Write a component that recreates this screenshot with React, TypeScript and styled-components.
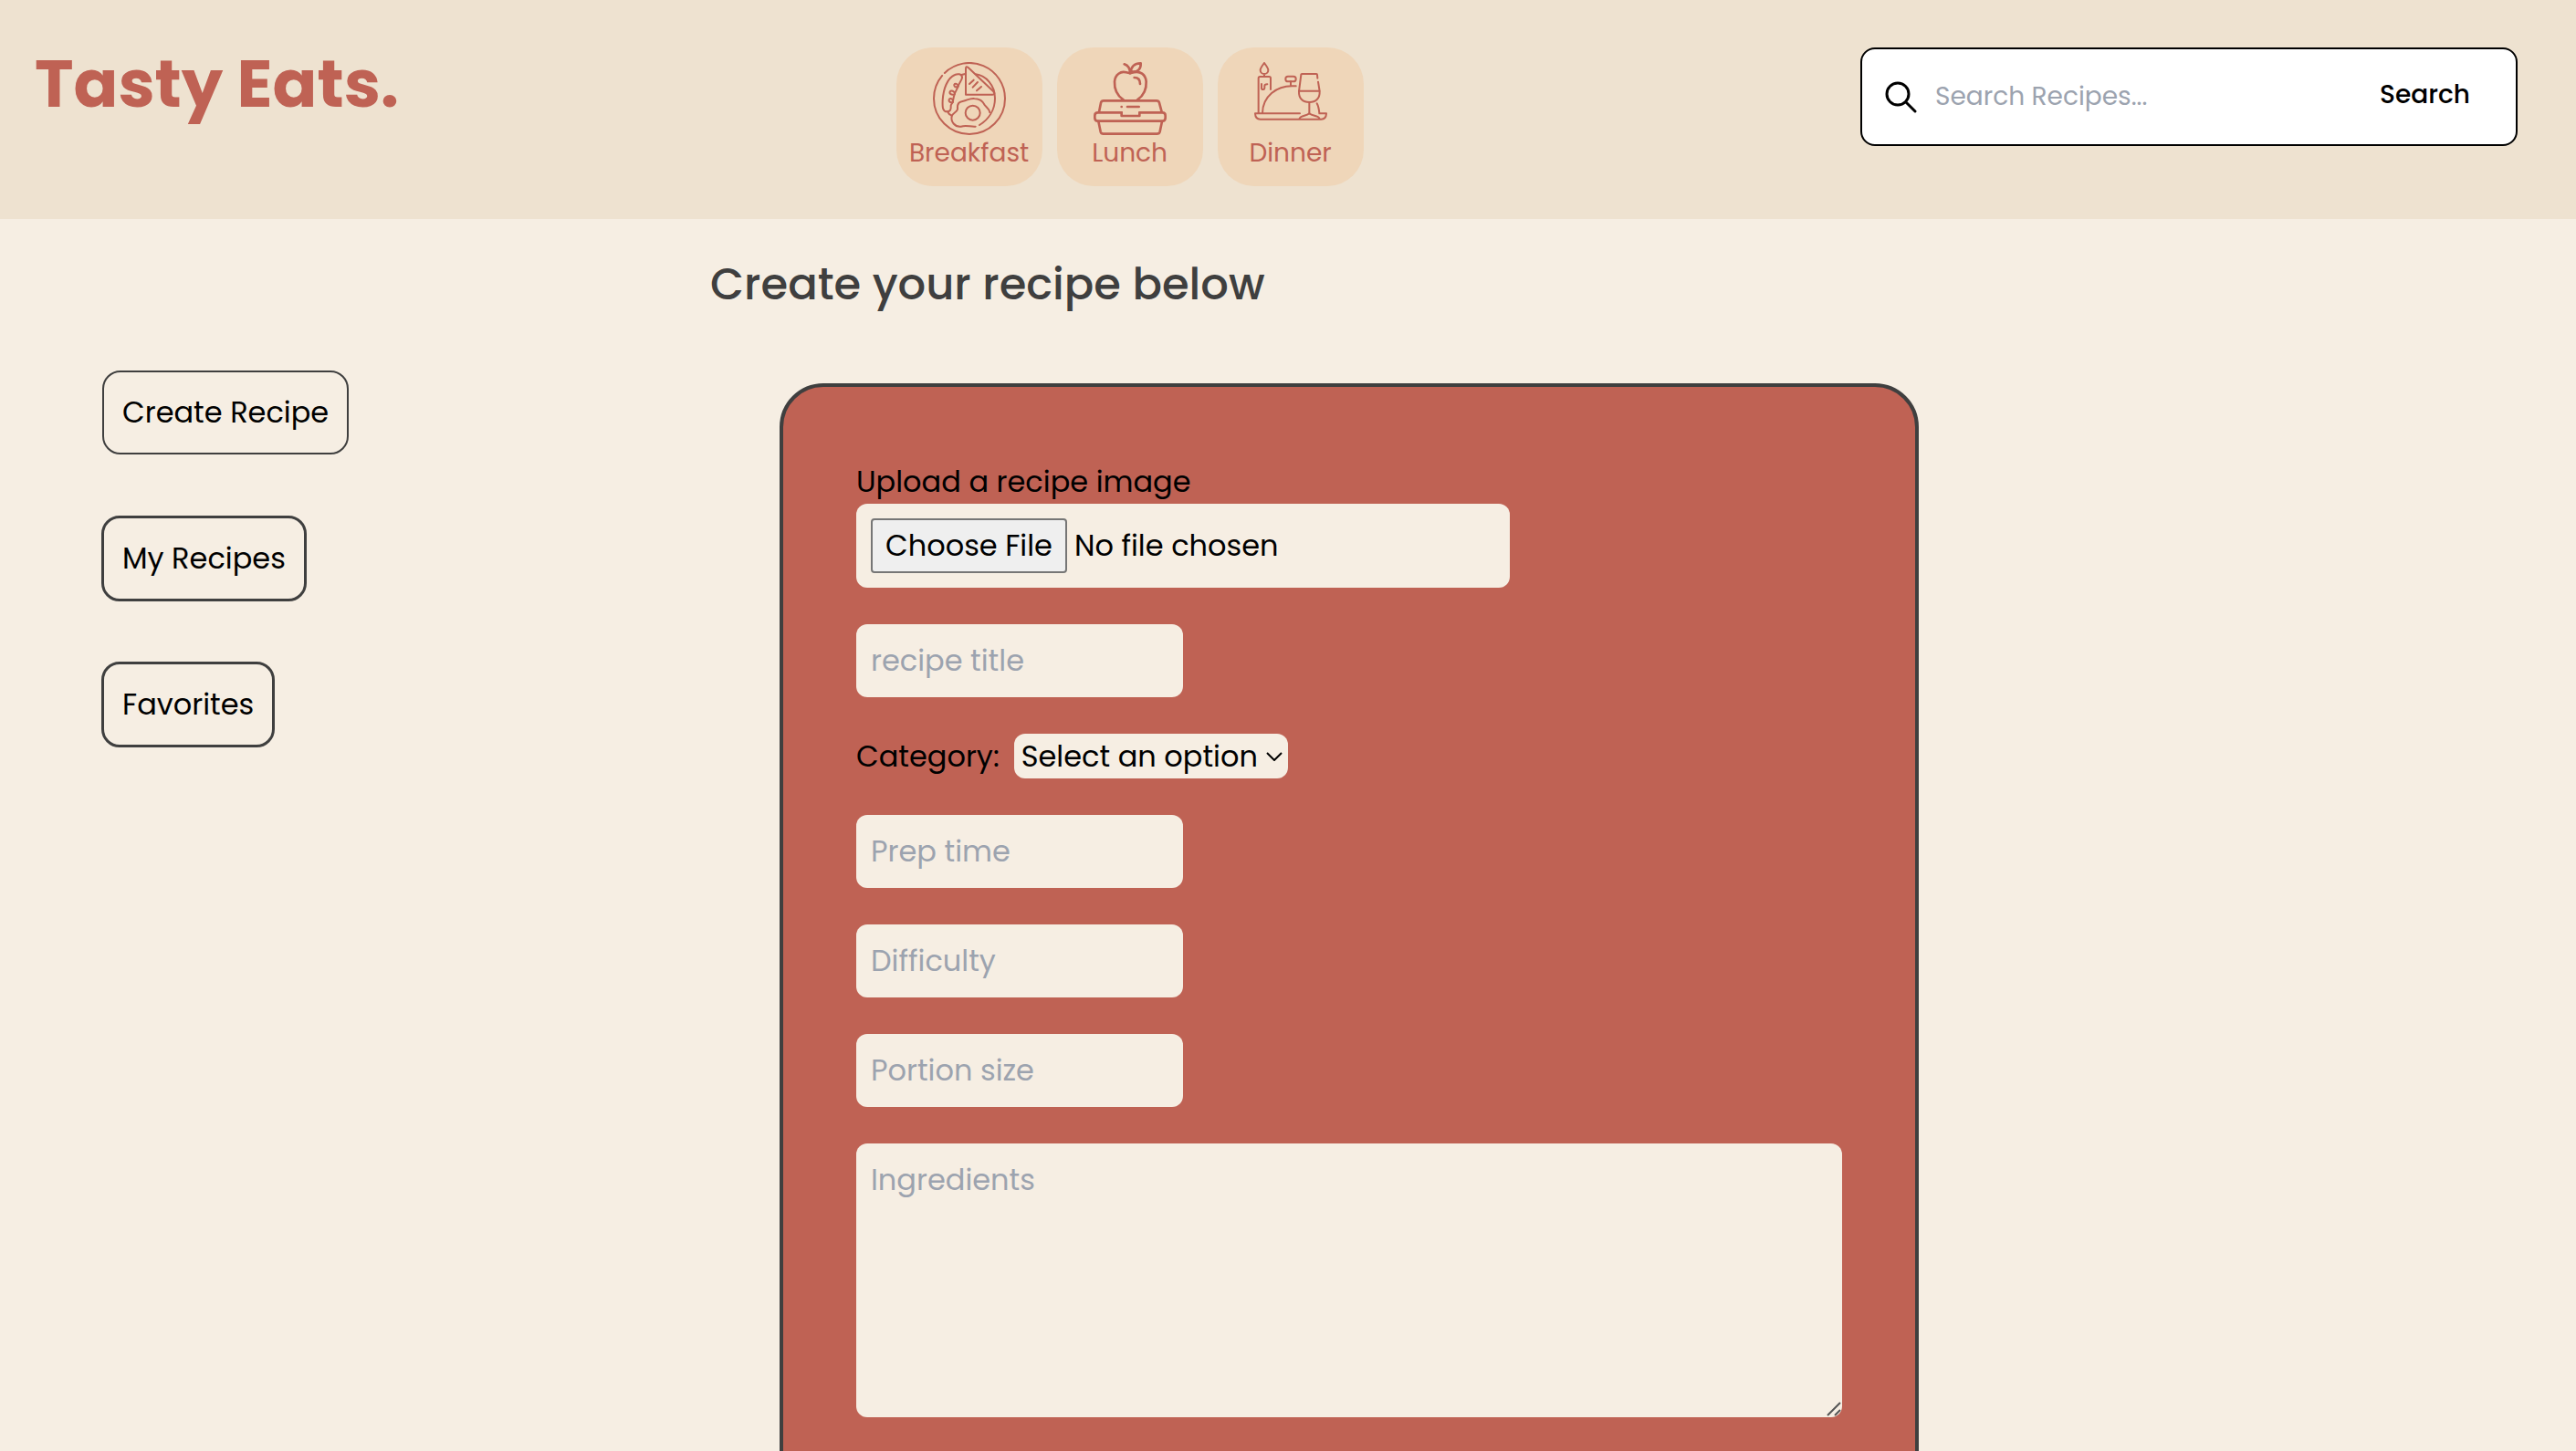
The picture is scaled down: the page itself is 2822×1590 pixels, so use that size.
import React from "react";
import styled, { createGlobalStyle } from "styled-components";

const color = {
  page: "#f6eee3",
  header: "#eee2d0",
  tile: "#efd6b9",
  brand: "#bf6254",
  ink: "#3f3f3f",
  hint: "#9ca3af",
};

const GlobalStyle = createGlobalStyle`
  *, *::before, *::after { box-sizing: border-box; }
  body {
    margin: 0;
    background: ${color.page};
    color: #000;
    font-family: Poppins, Inter, "Open Sans", sans-serif;
    font-size: 32px;
    line-height: 48px;
  }
  button, input, select, textarea {
    margin: 0;
    font: inherit;
    color: inherit;
  }
  input::placeholder, textarea::placeholder { color: ${color.hint}; opacity: 1; }
`;

const Page = styled.div`
  height: 100vh;
  overflow: hidden;
`;

const Header = styled.header`
  display: flex;
  justify-content: space-between;
  align-items: flex-start;
  min-height: 240px;
  padding: 52px 64px 36px 38px;
  background: ${color.header};
`;

const Logo = styled.a`
  color: ${color.brand};
  font-size: 72px;
  font-weight: 700;
  line-height: 80px;
  text-decoration: none;
`;

const Meals = styled.nav`
  display: flex;
  gap: 16px;
`;

const Meal = styled.a`
  display: flex;
  flex-direction: column;
  align-items: center;
  width: 160px;
  padding: 16px 0;
  border-radius: 40px;
  background: ${color.tile};
  color: ${color.brand};
  font-size: 28px;
  line-height: 40px;
  text-decoration: none;
`;

const MealIcon = styled.svg<{ $weight: number }>`
  width: 80px;
  height: 80px;
  fill: none;
  stroke: currentColor;
  stroke-width: ${(p) => p.$weight};
  stroke-linecap: round;
  stroke-linejoin: round;
`;

const SearchForm = styled.form`
  display: flex;
  align-items: center;
  width: 720px;
  height: 108px;
  padding: 0 24px;
  border: 2px solid #000;
  border-radius: 16px;
  background: #fff;
  font-size: 28px;
  line-height: 40px;
`;

const SearchIcon = styled.svg`
  flex: none;
  width: 36px;
  height: 36px;
  fill: none;
  stroke: #000;
  stroke-width: 3;
  stroke-linecap: round;
`;

const SearchInput = styled.input`
  flex: 1;
  min-width: 0;
  padding: 0 20px;
  border: 0;
  outline: 0;
  background: transparent;
`;

const SearchButton = styled.button`
  padding: 0 26px 4px;
  border: 0;
  background: transparent;
  font-weight: 500;
`;

const Main = styled.main`
  display: grid;
  grid-template-columns: 778fr 2044fr;
`;

const Sidebar = styled.aside`
  display: flex;
  flex-direction: column;
  align-items: flex-start;
  gap: 66px;
  padding: 165px 0 0 111px;
`;

const SideButton = styled.button<{ $current?: boolean }>`
  margin: ${(p) => (p.$current ? 1 : 0)}px;
  padding: 20px;
  border: ${(p) => (p.$current ? 2 : 3)}px solid ${color.ink};
  border-radius: 20px;
  background: transparent;
`;

const Content = styled.section`
  padding: 36px 76px 0 0;
`;

const Title = styled.h1`
  margin: 0 0 72px;
  color: ${color.ink};
  font-size: 48px;
  font-weight: 500;
  line-height: 72px;
`;

const RecipeForm = styled.form`
  display: flex;
  flex-direction: column;
  align-items: flex-start;
  gap: 40px;
  max-width: 1248px;
  margin-left: 76px;
  padding: 80px;
  border: 4px solid ${color.ink};
  border-radius: 48px;
  background: ${color.brand};
`;

const Upload = styled.div`
  display: flex;
  flex-direction: column;
`;

const FileInput = styled.input`
  width: 716px;
  height: 92px;
  padding: 16px;
  border-radius: 12px;
  background: ${color.page};

  &::file-selector-button {
    height: 60px;
    margin: 0 8px 0 0;
    padding: 4px 14px;
    border: 2px solid #767676;
    border-radius: 4px;
    background: #efefef;
    color: #000;
    font: inherit;
  }
`;

const Field = styled.input`
  width: 358px;
  height: 80px;
  padding: 16px;
  border: 0;
  border-radius: 12px;
  background: ${color.page};
`;

const CategoryRow = styled.div`
  display: flex;
  align-items: center;
  gap: 16px;
`;

const SelectBox = styled.span`
  display: grid;
  align-items: center;
  justify-items: end;

  & > * { grid-area: 1 / 1; }
`;

const Select = styled.select`
  appearance: none;
  width: 300px;
  height: 49px;
  padding: 0 30px 0 8px;
  border: 0;
  border-radius: 12px;
  background: ${color.page};
`;

const Chevron = styled.svg`
  width: 18px;
  height: 10px;
  margin-right: 6px;
  fill: none;
  stroke: #000;
  stroke-width: 2;
  pointer-events: none;
`;

const AreaBox = styled.div`
  position: relative;
  display: flex;
  width: 100%;
`;

const Area = styled.textarea`
  width: 100%;
  height: 300px;
  padding: 16px;
  border: 0;
  border-radius: 12px;
  background: ${color.page};
  resize: none;
`;

const Grip = styled.svg`
  position: absolute;
  right: 1px;
  bottom: 1px;
  width: 16px;
  height: 16px;
  stroke: #555;
  stroke-width: 2;
  pointer-events: none;
`;

const BreakfastIcon = () => (
  <MealIcon viewBox="66 24 240 240" $weight={6} aria-hidden="true">
    <path d="M104.7 59.8A117 117 0 0 1 303 144A117 117 0 0 1 69 144A117 117 0 0 1 96.4 68.8" />
    <path d="M162 74C160 62 147 62 138 66C114 76 100 112 98 150C97 172 98 187 112 187C122 187 126 181 125 170C124 162 130 160 131 156" />
    <path d="M162 74C162 84 152 92 149 104C146 112 139 122 137 130C134 138 133 146 131 156" />
    <path d="M149 104C140 109 134 104 136 98C139 93 148 95 149 104" />
    <path d="M137 130C127 133 119 128 122 121C126 116 137 119 138 128" />
    <path d="M131 156C123 158 117 154 119 147C123 142 132 144 132 152" />
    <path d="M160 66L172 63M114 187C117 194 122 198 128 200" />
    <path d="M174 131V45Q174 36 182 42L265 121Q272 131 262 131Z" />
    <path d="M186 96L200 83M197 107L213 90M210 118L225 105" />
    <path d="M206 64C240 68 270 100 270 143C270 182 248 213 219 231" />
    <path d="M206 236C188 237 176 231 158 236C138 238 124 220 128 202C131 191 144 190 147 179C145 158 154 154 166 152C178 150 188 142 202 144C222 145 231 154 236 165C242 174 253 178 253 190" />
    <circle cx="197" cy="191" r="24" />
  </MealIcon>
);

const LunchIcon = () => (
  <MealIcon viewBox="54 24 240 240" $weight={8} aria-hidden="true">
    <path d="M152 148C131 134 122 110 123 88C125 64 144 53 161 58C170 61 178 61 187 58C206 53 225 64 227 88C228 110 219 134 198 148" />
    <path d="M176 60C176 40 188 28 209 28C210 46 200 57 182 56M155 31C167 35 174 45 174 61" />
    <path d="M188 75C200 75 207 83 207 96" />
    <path d="M72 188L78 158Q80 151 87 151H261Q268 151 270 158L278 188" />
    <path d="M146 190H68Q58 190 58 200V208Q58 218 68 218H280Q290 218 290 208V200Q290 190 280 190H206" />
    <path d="M146 190V201H205V190" />
    <path d="M70 219L77 253Q79 260 86 260H262Q270 260 272 253L279 219" />
    <path d="M146 171H146.1M165 171H203" />
  </MealIcon>
);

const DinnerIcon = () => (
  <MealIcon viewBox="72 24 240 240" $weight={6} aria-hidden="true">
    <path d="M105 27C97 38 92 44 92 50C92 58 98 63 105 63C112 63 118 58 118 50C118 44 113 38 105 27ZM105 63V71" />
    <path d="M86 192V77Q86 72 91 72H121Q126 72 126 77V114" />
    <path d="M96 96V110Q96 114 102 114Q106 114 106 108V102Q106 97 115 97" />
    <path d="M99 192C99 140 143 97 209 103" />
    <rect x="175" y="71" width="34" height="17" rx="8" />
    <path d="M192 88V100" />
    <path d="M280 77L279 66Q279 63 276 63H229Q226 63 226 66L219 120C218 144 232 156 253 156C274 156 288 144 287 120L282 89" />
    <path d="M221 119H286M253 156V192" />
    <path d="M221 209C226 199 242 202 253 193C264 202 282 199 286 209" />
    <path d="M278 160C284 171 285 181 286 193H309Q308 212 292 212H92Q76 212 75 193H222" />
  </MealIcon>
);

const meals = [
  { name: "Breakfast", Icon: BreakfastIcon },
  { name: "Lunch", Icon: LunchIcon },
  { name: "Dinner", Icon: DinnerIcon },
];

export default function App() {
  return (
    <Page>
      <GlobalStyle />
      <Header>
        <Logo href="#home">Tasty Eats.</Logo>
        <Meals aria-label="Meals">
          {meals.map(({ name, Icon }) => (
            <Meal key={name} href={`#${name.toLowerCase()}`}>
              <Icon />
              {name}
            </Meal>
          ))}
        </Meals>
        <SearchForm role="search" onSubmit={(e) => e.preventDefault()}>
          <SearchIcon viewBox="0 0 36 36" aria-hidden="true">
            <circle cx="15" cy="15" r="12" />
            <path d="M24 24L34 34" />
          </SearchIcon>
          <SearchInput type="text" aria-label="Search recipes" placeholder="Search Recipes..." />
          <SearchButton type="submit">Search</SearchButton>
        </SearchForm>
      </Header>
      <Main>
        <Sidebar>
          <SideButton type="button" $current>Create Recipe</SideButton>
          <SideButton type="button">My Recipes</SideButton>
          <SideButton type="button">Favorites</SideButton>
        </Sidebar>
        <Content>
          <Title>Create your recipe below</Title>
          <RecipeForm onSubmit={(e) => e.preventDefault()}>
            <Upload>
              <label htmlFor="image">Upload a recipe image</label>
              <FileInput id="image" type="file" />
            </Upload>
            <Field type="text" aria-label="Recipe title" placeholder="recipe title" />
            <CategoryRow>
              <label htmlFor="category">Category:</label>
              <SelectBox>
                <Select id="category" defaultValue="">
                  <option value="">Select an option</option>
                  {meals.map(({ name }) => (
                    <option key={name} value={name}>{name}</option>
                  ))}
                </Select>
                <Chevron viewBox="0 0 18 10" aria-hidden="true">
                  <path d="M1 1L9 9L17 1" />
                </Chevron>
              </SelectBox>
            </CategoryRow>
            <Field type="text" aria-label="Prep time" placeholder="Prep time" />
            <Field type="text" aria-label="Difficulty" placeholder="Difficulty" />
            <Field type="text" aria-label="Portion size" placeholder="Portion size" />
            <AreaBox>
              <Area aria-label="Ingredients" placeholder="Ingredients" />
              <Grip viewBox="0 0 16 16" aria-hidden="true">
                <path d="M1 15L15 1M9 15L15 9" />
              </Grip>
            </AreaBox>
          </RecipeForm>
        </Content>
      </Main>
    </Page>
  );
}
